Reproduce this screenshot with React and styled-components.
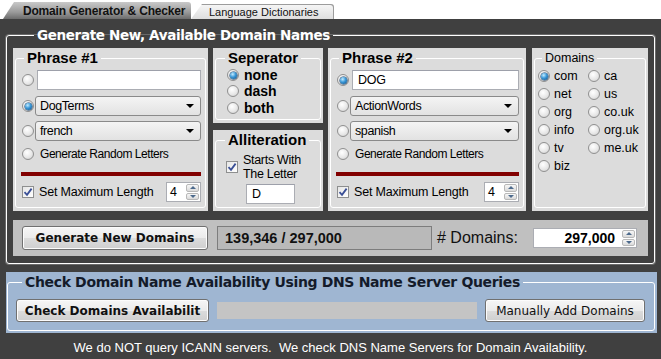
import React from "react"
import styled, { createGlobalStyle } from "styled-components"

const GlobalStyle = createGlobalStyle`
  html, body {
    margin: 0;
    padding: 0;
    background: #ffffff;
  }
  body {
    font-family: "Liberation Sans", Arial, sans-serif;
    font-size: 12px;
    color: #000;
  }
  * {
    box-sizing: border-box;
  }
`

const Window = styled.div`
  width: 661px;
  height: 359px;
  display: flex;
  flex-direction: column;
  overflow: hidden;
`

const TabStrip = styled.div`
  height: 19px;
  display: flex;
  align-items: flex-end;
  padding-left: 3px;
  background: #ffffff;
`

const Tab = styled.div`
  height: ${p => (p.$active ? 17 : 15)}px;
  width: ${p => p.$width}px;
  display: flex;
  align-items: center;
  padding-left: ${p => (p.$active ? 20 : 18)}px;
  font-size: ${p => (p.$active ? 12 : 11)}px;
  font-weight: ${p => (p.$active ? 700 : 400)};
  letter-spacing: ${p => (p.$active ? -0.2 : 0)}px;
  color: #111;
  border-top-right-radius: 3px;
  clip-path: polygon(0 100%, 11px 0, 100% 0, 100% 100%);
  background: ${p =>
    p.$active
      ? "linear-gradient(#c9c9c9, #9a9a9a 60%, #6c6c6c)"
      : "linear-gradient(#f7f7f7, #dedede)"};
  box-shadow: ${p => (p.$active ? "none" : "inset -1px 1px 0 #9c9c9c")};
`

const Page = styled.div`
  flex: 1;
  background: #404040;
  padding: 7px 4px 0 6px;
  display: flex;
  flex-direction: column;
`

const Group = styled.fieldset`
  margin: 0;
  min-inline-size: 0;
  border: 1px solid #ffffff;
  border-radius: 3px;
`

const MainGroup = styled(Group)`
  width: 649px;
  padding: 4px 6px 7px 6px;
  box-shadow: 0 0 0 1px #6a6a6a;
`

const BigLegend = styled.legend`
  margin-left: ${p => p.$ml}px;
  padding: 0 3px;
  font-family: "DejaVu Sans", Verdana, sans-serif;
  font-weight: 700;
  font-size: ${p => p.$size}px;
  letter-spacing: -0.35px;
  line-height: 18px;
  color: ${p => p.$color};
`

const PanelRow = styled.div`
  display: flex;
  gap: 5px;
  height: 163px;
`

const Column = styled.div`
  display: flex;
  flex-direction: column;
  gap: 7px;
  width: ${p => p.$width}px;
`

const Panel = styled.div`
  background: #dcdcdc;
  width: ${p => (p.$width ? `${p.$width}px` : "auto")};
  height: ${p => (p.$height ? `${p.$height}px` : "auto")};
  margin-left: ${p => p.$ml || 0}px;
  padding: 1px 2px 3px 2px;
  display: flex;
`

const InnerGroup = styled(Group)`
  flex: 1;
  display: flex;
  flex-direction: column;
  padding: 0 ${p => p.$pr ?? 4}px 3px ${p => p.$pl ?? 6}px;
`

const PanelLegend = styled.legend`
  margin-left: ${p => p.$ml ?? 2}px;
  padding: 0 3px;
  font-size: ${p => (p.$plain ? 12.5 : 15)}px;
  font-weight: ${p => (p.$plain ? 400 : 700)};
  line-height: 18px;
  color: #000;
`

const Row = styled.div`
  display: flex;
  align-items: center;
  height: ${p => p.$h}px;
  margin-top: ${p => p.$mt || 0}px;
  gap: ${p => p.$gap ?? 3}px;
`

const RadioDot = styled.span`
  flex: none;
  width: 12px;
  height: 12px;
  border-radius: 50%;
  border: 1px solid #909090;
  background: radial-gradient(circle at 40% 35%, #ffffff 0%, #e8e8e8 55%, #c9c9c9 100%);
  display: inline-flex;
  align-items: center;
  justify-content: center;
  &::after {
    content: "";
    display: ${p => (p.$on ? "block" : "none")};
    width: 7px;
    height: 7px;
    border-radius: 50%;
    background: radial-gradient(circle at 38% 32%, #c4ecff 0%, #3a98d8 45%, #0d4c82 100%);
    box-shadow: 0 0 0 0.5px #123c66;
  }
`

const CheckBox = styled.span`
  flex: none;
  width: 12px;
  height: 12px;
  border: 1px solid #8e8f8f;
  background: linear-gradient(135deg, #e6e6e6, #ffffff);
  display: inline-flex;
  align-items: center;
  justify-content: center;
`

const Label = styled.span`
  font-size: ${p => p.$size || 12}px;
  font-weight: ${p => (p.$bold ? 700 : 400)};
  letter-spacing: ${p => p.$ls ?? 0}px;
  line-height: 14px;
  white-space: nowrap;
`

const TextBox = styled.div`
  flex: ${p => (p.$width ? "none" : 1)};
  width: ${p => (p.$width ? `${p.$width}px` : "auto")};
  height: 20px;
  margin-left: ${p => p.$ml || 0}px;
  background: #ffffff;
  border: 1px solid #abadb3;
  border-top-color: #9da0aa;
  padding: 0 5px;
  display: flex;
  align-items: center;
  font-size: 12.5px;
  letter-spacing: -0.3px;
`

const Select = styled.div`
  flex: 1;
  height: 20px;
  margin-left: -2px;
  background: linear-gradient(#f4f4f4, #e2e2e2);
  border: 1px solid #8a8a8a;
  border-radius: 3px;
  padding: 0 6px 0 4px;
  display: flex;
  align-items: center;
  justify-content: space-between;
  font-size: 12.5px;
  letter-spacing: -0.4px;
  &::after {
    content: "";
    border-left: 4px solid transparent;
    border-right: 4px solid transparent;
    border-top: 4px solid #000;
  }
`

const RedRule = styled.div`
  height: 4px;
  margin: 11px 0 0 -1px;
  background: #820000;
`

const Numeric = styled.div`
  flex: none;
  width: ${p => p.$width}px;
  height: 20px;
  margin-left: auto;
  margin-right: ${p => p.$mr || 0}px;
  background: #ffffff;
  border: 1px solid #abadb3;
  display: flex;
  align-items: center;
  padding-left: ${p => (p.$right ? 0 : 3)}px;
  font-size: ${p => (p.$right ? 14 : 12.5)}px;
  font-weight: ${p => (p.$right ? 700 : 400)};
`

const NumValue = styled.span`
  flex: 1;
  text-align: ${p => (p.$right ? "right" : "left")};
  padding-right: ${p => (p.$right ? 6 : 0)}px;
`

const Spin = styled.span`
  flex: none;
  width: 15px;
  align-self: stretch;
  display: flex;
  flex-direction: column;
  padding: 1px;
  gap: 1px;
`

const SpinButton = styled.span`
  flex: 1;
  border: 1px solid #b8b8b8;
  border-radius: 2px;
  background: linear-gradient(#f7f7f7, #dadada);
  display: flex;
  align-items: center;
  justify-content: center;
  &::after {
    content: "";
    border-left: 3px solid transparent;
    border-right: 3px solid transparent;
    ${p => (p.$down ? "border-top" : "border-bottom")}: 3px solid #4d6a8c;
  }
`

const MidGroup = styled(Group)`
  flex: 1;
  display: flex;
  flex-direction: column;
  padding: 0 4px 3px ${p => p.$pl}px;
`

const DomainGrid = styled.div`
  display: grid;
  grid-template-columns: 50px 1fr;
  grid-auto-rows: 18px;
  align-items: center;
`

const Bar = styled.div`
  margin-top: 9px;
  height: 36px;
  background: #c0c0c0;
  display: flex;
  align-items: center;
  padding: 0 11px 0 9px;
`

const Button = styled.div`
  flex: none;
  width: ${p => p.$width}px;
  height: ${p => p.$h || 24}px;
  border: 1px solid #707070;
  border-radius: 3px;
  background: linear-gradient(#f6f6f6 0%, #ebebeb 50%, #dcdcdc 51%, #cfcfcf 100%);
  box-shadow: inset 0 0 0 1px #fcfcfc;
  display: flex;
  align-items: center;
  justify-content: center;
  font-family: "DejaVu Sans", Verdana, sans-serif;
  font-size: 12px;
  font-weight: ${p => (p.$bold ? 700 : 400)};
  color: #111;
`

const CountField = styled.div`
  flex: none;
  width: 215px;
  height: 24px;
  margin-left: 9px;
  background: #b9b9b9;
  border: 1px solid #7d7d7d;
  display: flex;
  align-items: center;
  padding-left: 7px;
  font-size: 14.5px;
  font-weight: 700;
  color: #111;
`

const BarLabel = styled.span`
  margin-left: 5px;
  font-size: 16px;
  color: #111;
`

const CheckPanel = styled.div`
  margin-top: 8px;
  width: 651px;
  height: 61px;
  background: #9fb6d2;
  padding: 1px 2px 2px 1px;
  display: flex;
`

const CheckGroup = styled(Group)`
  flex: 1;
  padding: 7px 8px 7px 8px;
  display: flex;
  align-items: center;
  gap: 8px;
`

const Progress = styled.div`
  width: 260px;
  height: 17px;
  background: #c4c4c4;
`

const Footer = styled.div`
  flex: 1;
  display: flex;
  align-items: center;
  justify-content: center;
  padding-top: 2px;
  margin-left: -6px;
  margin-right: -4px;
  color: #ffffff;
  font-size: 13px;
  white-space: pre;
`

const Tick = () => (
  <svg width="10" height="10" viewBox="0 0 10 10">
    <path d="M1.5 5.2 L4 7.8 L8.6 1.6" fill="none" stroke="#3a4f96" strokeWidth="1.8" />
  </svg>
)

const Radio = ({ on, children, bold, size, gap = 5, h = 17 }) => (
  <Row $h={h} $gap={gap}>
    <RadioDot $on={on} />
    <Label $bold={bold} $size={size}>{children}</Label>
  </Row>
)

const Spinner = () => (
  <Spin>
    <SpinButton />
    <SpinButton $down />
  </Spin>
)

const Phrase = ({ title, width, text, list, lang, textOn, listOn }) => (
  <Panel $width={width}>
    <InnerGroup>
      <PanelLegend>{title}</PanelLegend>
      <Row $h={20} $mt={3}>
        <RadioDot $on={textOn} />
        <TextBox>{text}</TextBox>
      </Row>
      <Row $h={20} $mt={6}>
        <RadioDot $on={listOn} />
        <Select>{list}</Select>
      </Row>
      <Row $h={20} $mt={5}>
        <RadioDot />
        <Select>{lang}</Select>
      </Row>
      <Row $h={14} $mt={6} $gap={6}>
        <RadioDot />
        <Label $ls={-0.45}>Generate Random Letters</Label>
      </Row>
      <RedRule />
      <Row $h={20} $mt={6} $gap={5}>
        <CheckBox><Tick /></CheckBox>
        <Label $size={12.5} $ls={-0.2}>Set Maximum Length</Label>
        <Numeric $width={35}>
          <NumValue>4</NumValue>
          <Spinner />
        </Numeric>
      </Row>
    </InnerGroup>
  </Panel>
)

const domains = [
  ["com", true], ["ca"], ["net"], ["us"], ["org"], ["co.uk"],
  ["info"], ["org.uk"], ["tv"], ["me.uk"], ["biz"],
]

export default function App() {
  return (
    <>
      <GlobalStyle />
      <Window>
        <TabStrip>
          <Tab $active $width={188}>Domain Generator &amp; Checker</Tab>
          <Tab $width={143}>Language Dictionaries</Tab>
        </TabStrip>
        <Page>
          <MainGroup>
            <BigLegend $color="#ffffff" $ml={21} $size={13.5}>Generate New, Available Domain Names</BigLegend>
            <PanelRow>
              <Phrase title="Phrase #1" width={195} text="" list="DogTerms" lang="french" listOn />
              <Column $width={110}>
                <Panel $height={75}>
                  <MidGroup $pl={11}>
                    <PanelLegend $ml={-2}>Seperator</PanelLegend>
                    <Radio on bold size={14}>none</Radio>
                    <Radio bold size={14}>dash</Radio>
                    <Radio bold size={14}>both</Radio>
                  </MidGroup>
                </Panel>
                <Panel $height={81}>
                  <MidGroup $pl={10}>
                    <PanelLegend $ml={-1}>Alliteration</PanelLegend>
                    <Row $h={28} $mt={4} $gap={5}>
                      <CheckBox><Tick /></CheckBox>
                      <Label $size={12.5} $ls={-0.3}>Starts With<br />The Letter</Label>
                    </Row>
                    <Row $h={20} $mt={3}>
                      <TextBox $width={49} $ml={20}>D</TextBox>
                    </Row>
                  </MidGroup>
                </Panel>
              </Column>
              <Phrase title="Phrase #2" width={198} text="DOG" list="ActionWords" lang="spanish" textOn />
              <Panel $width={116} $ml={1}>
                <MidGroup $pl={3}>
                  <PanelLegend $ml={4} $plain>Domains</PanelLegend>
                  <DomainGrid>
                    {domains.map(([name, on]) => (
                      <Radio key={name} on={on} size={12.5} gap={4} h={18}>{name}</Radio>
                    ))}
                  </DomainGrid>
                </MidGroup>
              </Panel>
            </PanelRow>
            <Bar>
              <Button $width={186} $bold>Generate New Domains</Button>
              <CountField>139,346 / 297,000</CountField>
              <BarLabel># Domains:</BarLabel>
              <Numeric $width={104} $right>
                <NumValue $right>297,000</NumValue>
                <Spinner />
              </Numeric>
            </Bar>
          </MainGroup>
          <CheckPanel>
            <CheckGroup>
              <BigLegend $color="#141b2a" $ml={6} $size={14}>Check Domain Name Availability Using DNS Name Server Queries</BigLegend>
              <Button $width={193} $h={23} $bold>Check Domains Availabilit</Button>
              <Progress />
              <Button $width={160} $h={23}>Manually Add Domains</Button>
            </CheckGroup>
          </CheckPanel>
          <Footer>We do NOT query ICANN servers.  We check DNS Name Servers for Domain Availability.</Footer>
        </Page>
      </Window>
    </>
  )
}
